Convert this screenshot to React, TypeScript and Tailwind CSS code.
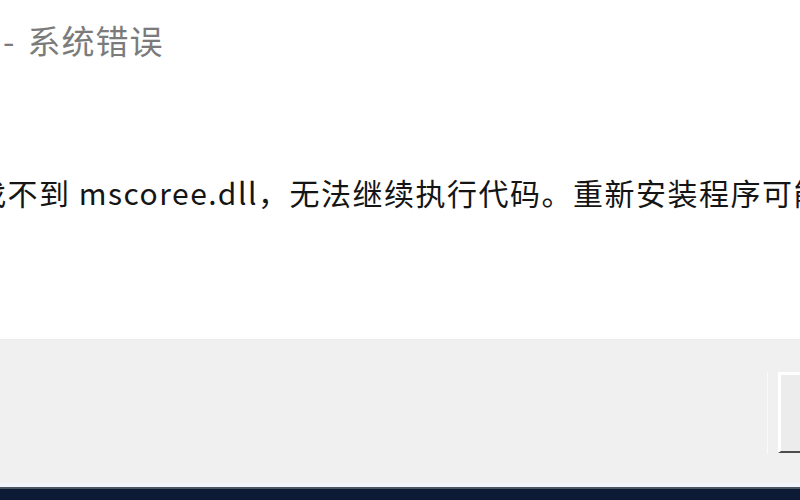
const App = () => {
  return (
    <div
      className="w-[800px] h-[500px] overflow-hidden bg-white flex flex-col"
      style={{ fontFamily: '"Noto Sans CJK SC", "Noto Sans", sans-serif' }}
    >
      {/* dialog body */}
      <div className="h-[339px] flex flex-col whitespace-nowrap">
        <div className="pt-[24px] pl-[3px] text-[33px] leading-none tracking-[1px] text-[#7b7b7b]">
          -<span className="ml-[12px]">系统错误</span>
        </div>
        <div className="mt-[120px] ml-[-24px] text-[30px] leading-none tracking-[1.5px] text-[#151515]">
          找不到 mscoree.dll，无法继续执行代码。重新安装程序可能会解决此问题。
        </div>
      </div>

      {/* button strip */}
      <div className="h-[144px] bg-[#f0f0f0] border-t border-[#ececec] flex justify-end pt-[32px]">
        <div className="h-[82px] pl-[10px] border-l border-[#fafafa]">
          <div className="w-[22px] h-[81px] bg-[#ececec] border-l-[3px] border-t-[3px] border-white border-b-[2px] border-b-[#4d4d4d]" />
        </div>
      </div>

      {/* taskbar edge */}
      <div className="h-[4px] bg-[#f2f6fa]" />
      <div className="h-[2px] bg-[#4b5564]" />
      <div className="flex-1 bg-[#0c1a35]" />
    </div>
  );
};

export default App;
